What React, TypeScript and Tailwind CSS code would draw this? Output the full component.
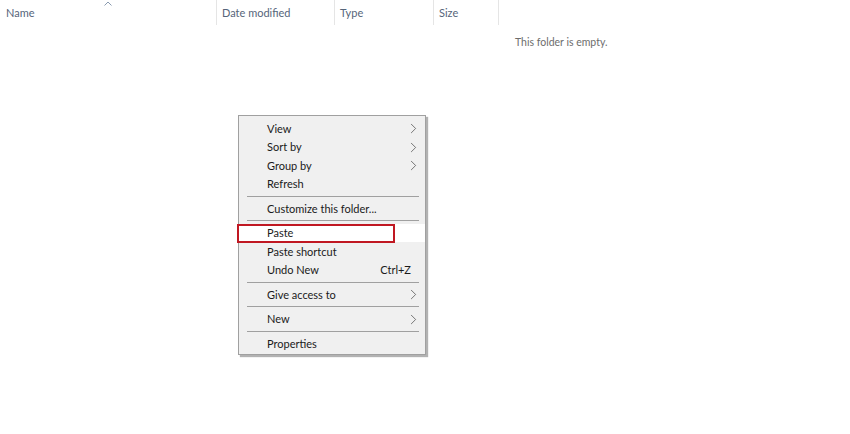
import { ChevronRight } from "lucide-react";

type Item =
  | { kind: "item"; label: string; sub?: boolean; shortcut?: string; active?: boolean }
  | { kind: "sep" };

const items: Item[] = [
  { kind: "item", label: "View", sub: true },
  { kind: "item", label: "Sort by", sub: true },
  { kind: "item", label: "Group by", sub: true },
  { kind: "item", label: "Refresh" },
  { kind: "sep" },
  { kind: "item", label: "Customize this folder..." },
  { kind: "sep" },
  { kind: "item", label: "Paste", active: true },
  { kind: "item", label: "Paste shortcut" },
  { kind: "item", label: "Undo New", shortcut: "Ctrl+Z" },
  { kind: "sep" },
  { kind: "item", label: "Give access to", sub: true },
  { kind: "sep" },
  { kind: "item", label: "New", sub: true },
  { kind: "sep" },
  { kind: "item", label: "Properties" },
];

function ContextMenu() {
  return (
    <div className="absolute left-[238px] top-[115px] w-[188px] bg-[#f0f0f0] border border-[#a0a0a0] pt-[3px] pb-[1px] shadow-[2px_2px_1px_rgba(0,0,0,0.3)]">
      {items.map((it, i) =>
        it.kind === "sep" ? (
          <div key={i} className="h-[6px] flex items-center pl-[8px] pr-[6px]">
            <div className="h-px w-full bg-[#a0a0a0]" />
          </div>
        ) : (
          <div
            key={i}
            className={
              "relative h-[18.5px] flex items-center pt-[1px] pl-[28px] pr-[14px] text-[11px] text-[#1a1a1a] " +
              (it.active ? "bg-white" : "")
            }
          >
            <span className="flex-1">{it.label}</span>
            {it.shortcut && <span>{it.shortcut}</span>}
            {it.sub && (
              <ChevronRight className="absolute right-[3px] w-[17px] h-[17px] text-[#444]" strokeWidth={1} />
            )}
            {it.active && (
              <div className="absolute left-[-2px] top-0 w-[158px] h-[19px] border-2 border-[#c01822]" />
            )}
          </div>
        )
      )}
    </div>
  );
}

export default function App() {
  return (
    <div className="relative w-[850px] h-[434px] bg-white overflow-hidden font-['Lato','Noto_Sans',sans-serif]">
      <div className="flex h-[25px] text-[11px] text-[#56657a]">
        <div className="relative w-[216px] pl-[6px] pt-[5px]">
          Name
          <svg className="absolute left-[104px] top-[1px]" width="8" height="5" viewBox="0 0 8 5">
            <path d="M0.5 4.5 L4 1 L7.5 4.5" fill="none" stroke="#8a9bb0" strokeWidth="1" />
          </svg>
        </div>
        <div className="w-[118px] border-l border-[#e5e5e5] pl-[5px] pt-[5px]">Date modified</div>
        <div className="w-[99px] border-l border-[#e5e5e5] pl-[5px] pt-[5px]">Type</div>
        <div className="w-[66px] border-l border-[#e5e5e5] border-r pl-[5px] pt-[5px]">Size</div>
      </div>
      <div className="pl-[515px] pt-[10px] text-[10.5px] text-[#6d6d6d]">This folder is empty.</div>
      <ContextMenu />
    </div>
  );
}
